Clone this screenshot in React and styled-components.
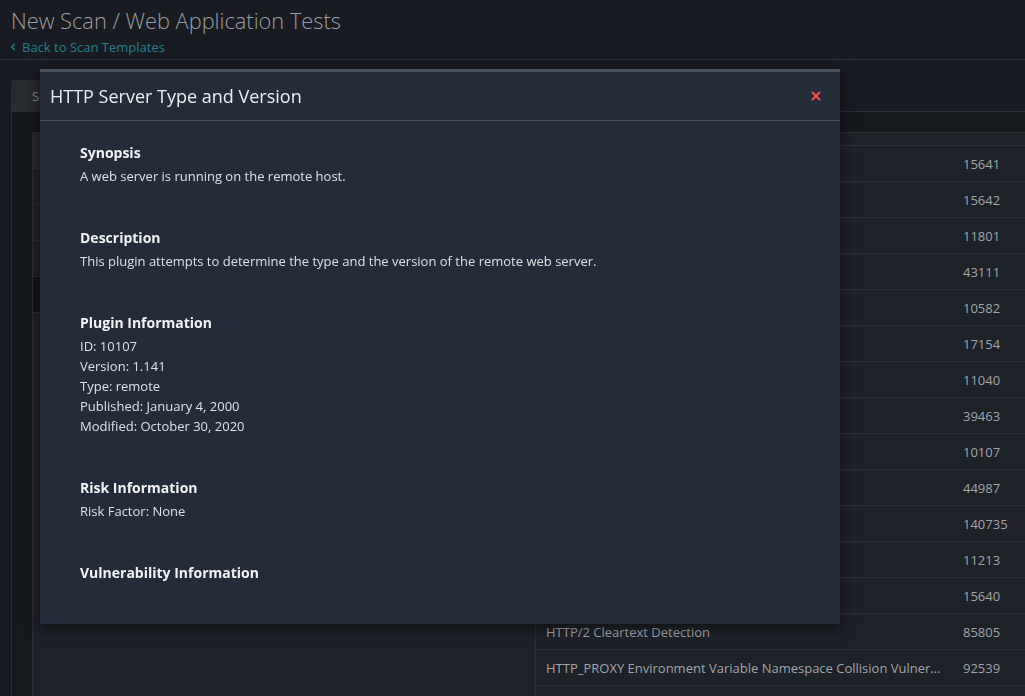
import React from 'react';
import styled, { createGlobalStyle } from 'styled-components';
import { X, ChevronLeft } from 'lucide-react';

const GlobalStyle = createGlobalStyle`
  html, body {
    margin: 0;
    padding: 0;
    background: #181b22;
    font-family: "Open Sans", "Liberation Sans", sans-serif;
    overflow: hidden;
  }
  * { box-sizing: border-box; }
`;

const Page = styled.div`
  width: 1025px;
  height: 696px;
  display: flex;
  flex-direction: column;
  background: #181b22;
`;

const Header = styled.header`
  padding: 7px 11px 3px;
  border-bottom: 1px solid #2a2e35;
`;

const Title = styled.h1`
  margin: 0;
  font-size: 21.8px;
  line-height: 28px;
  font-weight: 300;
  color: #9a9ea4;
`;

const BackLink = styled.a`
  display: flex;
  align-items: center;
  gap: 4px;
  margin-top: 3px;
  margin-left: -3px;
  font-size: 13px;
  line-height: 18px;
  color: #22808c;
  text-decoration: none;
`;

const Content = styled.div`
  flex: 1;
  display: flex;
  flex-direction: column;
  padding: 20px 0 0 11px;
  min-height: 0;
`;

const TabBar = styled.div`
  display: flex;
  height: 32px;
  border-bottom: 1px solid #2a2e35;
`;

const Tab = styled.div`
  display: flex;
  align-items: center;
  padding: 0 21px;
  width: 130px;
  background: #282b30;
  border-radius: 3px 3px 0 0;
  font-size: 13px;
  color: #7f8388;
`;

const Panel = styled.div`
  flex: 1;
  display: flex;
  flex-direction: column;
  padding: 20px 0 0 20px;
  border-left: 1px solid #2a2e35;
  background: #15181d;
  min-height: 0;
`;

const Split = styled.div`
  flex: 1;
  display: flex;
  border-top: 1px solid #2a2e35;
  border-left: 1px solid #2a2e35;
  background: #1d2128;
  min-height: 0;
  min-width: 0;
`;

const FamilyPane = styled.div`
  width: 503px;
  flex-shrink: 0;
  border-right: 1px solid #2a2e35;
  display: flex;
  flex-direction: column;
`;

const FamilyRow = styled.div`
  height: 36px;
  display: flex;
  align-items: center;
  padding: 0 11px;
  border-bottom: 1px solid #2a2e35;
  font-size: 13px;
  color: #a0a4a9;
  background: ${({ $variant }) =>
    $variant === 'head' ? '#262a30' : $variant === 'active' ? '#121519' : 'transparent'};
`;

const PluginPane = styled.div`
  flex: 1;
  min-width: 0;
  display: flex;
  flex-direction: column;
`;

const PluginHead = styled.div`
  height: 13px;
  border-bottom: 1px solid #2a2e35;
  background: #1e2229;
`;

const PluginRow = styled.div`
  height: 36px;
  display: flex;
  align-items: center;
  padding-left: 10px;
  border-bottom: 1px solid #2a2e35;
  font-size: 13px;
  color: #a2a5aa;
`;

const PluginName = styled.span`
  flex: 1;
  min-width: 0;
  margin-right: 20px;
  white-space: nowrap;
  overflow: hidden;
  text-overflow: ellipsis;
`;

const PluginId = styled.span`
  width: 62px;
  flex-shrink: 0;
`;

const Modal = styled.div`
  position: fixed;
  left: 40px;
  top: 69px;
  width: 800px;
  background: #242c3a;
  border-top: 3px solid #48525e;
  box-shadow: 0 3px 14px rgba(0, 0, 0, 0.55);
`;

const ModalHeader = styled.div`
  height: 49px;
  display: flex;
  align-items: center;
  justify-content: space-between;
  padding: 0 17px 0 10px;
  border-bottom: 1px solid #49515b;
`;

const ModalTitle = styled.h2`
  margin: 0;
  font-size: 18px;
  line-height: 24px;
  font-weight: 400;
  color: #eceef0;
`;

const CloseButton = styled.button`
  display: flex;
  padding: 0;
  border: none;
  background: none;
  color: #f0505a;
  cursor: pointer;
`;

const ModalBody = styled.div`
  padding: 22px 40px 38px;
`;

const Section = styled.section`
  margin-bottom: 42px;
  &:last-child { margin-bottom: 0; }
`;

const SectionTitle = styled.h3`
  margin: 0 0 3px;
  font-size: 14px;
  line-height: 20px;
  font-weight: 700;
  color: #f2f3f5;
`;

const Line = styled.div`
  font-size: 13px;
  line-height: 20px;
  color: #dde0e4;
`;

// family list sits under the modal; only the row shading shows at its left edge
const families = ['head', null, null, null, 'active'];

// only the last two names are visible beside the modal
const plugins = [
  ['', '15641'],
  ['', '15642'],
  ['', '11801'],
  ['', '43111'],
  ['', '10582'],
  ['', '17154'],
  ['', '11040'],
  ['', '39463'],
  ['', '10107'],
  ['', '44987'],
  ['', '140735'],
  ['', '11213'],
  ['', '15640'],
  ['HTTP/2 Cleartext Detection', '85805'],
  ['HTTP_PROXY Environment Variable Namespace Collision Vulnerability (httpoxy)', '92539'],
];

const App = () => (
  <Page>
    <GlobalStyle />
    <Header>
      <Title>New Scan / Web Application Tests</Title>
      <BackLink href="#">
        <ChevronLeft size={10} strokeWidth={4} />
        Back to Scan Templates
      </BackLink>
    </Header>
    <Content>
      <TabBar>
        <Tab>Settings</Tab>
      </TabBar>
      <Panel>
        <Split>
          <FamilyPane>
            {families.map((v, i) => (
              <FamilyRow key={i} $variant={v} />
            ))}
          </FamilyPane>
          <PluginPane>
            <PluginHead />
            {plugins.map(([name, id]) => (
              <PluginRow key={id}>
                <PluginName>{name}</PluginName>
                <PluginId>{id}</PluginId>
              </PluginRow>
            ))}
          </PluginPane>
        </Split>
      </Panel>
    </Content>

    <Modal>
      <ModalHeader>
        <ModalTitle>HTTP Server Type and Version</ModalTitle>
        <CloseButton aria-label="Close">
          <X size={14} strokeWidth={3.5} />
        </CloseButton>
      </ModalHeader>
      <ModalBody>
        <Section>
          <SectionTitle>Synopsis</SectionTitle>
          <Line>A web server is running on the remote host.</Line>
        </Section>
        <Section>
          <SectionTitle>Description</SectionTitle>
          <Line>This plugin attempts to determine the type and the version of the remote web server.</Line>
        </Section>
        <Section>
          <SectionTitle>Plugin Information</SectionTitle>
          <Line>ID: 10107</Line>
          <Line>Version: 1.141</Line>
          <Line>Type: remote</Line>
          <Line>Published: January 4, 2000</Line>
          <Line>Modified: October 30, 2020</Line>
        </Section>
        <Section>
          <SectionTitle>Risk Information</SectionTitle>
          <Line>Risk Factor: None</Line>
        </Section>
        <Section>
          <SectionTitle>Vulnerability Information</SectionTitle>
        </Section>
      </ModalBody>
    </Modal>
  </Page>
);

export default App;
